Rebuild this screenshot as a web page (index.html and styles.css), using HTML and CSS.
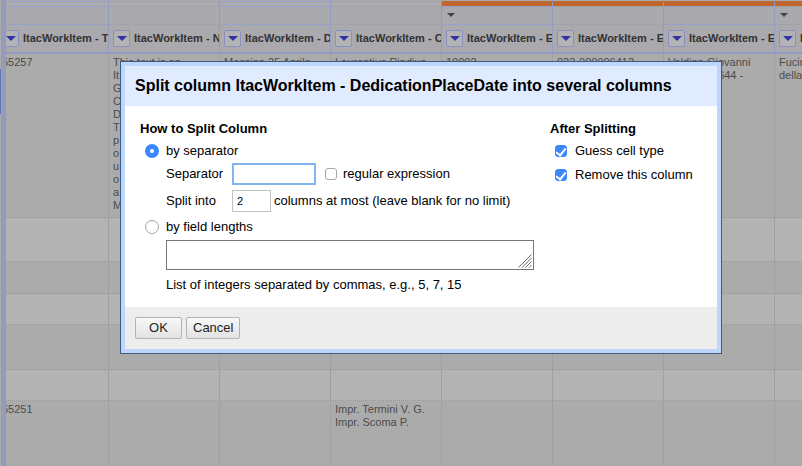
FILE: index.html
```
<!DOCTYPE html>
<html lang="en">
<head>
<meta charset="utf-8">
<title>Split column</title>
<link rel="stylesheet" href="styles.css">
</head>
<body>
<div class="app">
  <div class="rail"><span class="rail-thumb"></span></div>
  <div class="grid-view">
    <table class="data">
      <thead>
        <tr class="edge"><td></td><td></td><td></td><td></td><td class="group"></td><td class="group"></td><td class="group"></td><td class="group"></td></tr>
        <tr class="band"><td></td><td></td><td></td><td></td><td class="group"></td><td class="group"></td><td class="group"></td><td class="group"></td></tr>
        <tr class="toggles"><td></td><td></td><td></td><td></td><td><span class="caret"></span></td><td></td><td></td><td><span class="caret"></span></td></tr>
        <tr class="names">
          <th><div class="name"><button class="menu" aria-label="Column menu"></button>ItacWorkItem - T</div></th>
          <th><div class="name"><button class="menu" aria-label="Column menu"></button>ItacWorkItem - N</div></th>
          <th><div class="name"><button class="menu" aria-label="Column menu"></button>ItacWorkItem - D</div></th>
          <th><div class="name"><button class="menu" aria-label="Column menu"></button>ItacWorkItem - C</div></th>
          <th><div class="name"><button class="menu" aria-label="Column menu"></button>ItacWorkItem - E</div></th>
          <th><div class="name"><button class="menu" aria-label="Column menu"></button>ItacWorkItem - E</div></th>
          <th><div class="name"><button class="menu" aria-label="Column menu"></button>ItacWorkItem - E</div></th>
          <th><div class="name"><button class="menu" aria-label="Column menu"></button>ItacWorkItem - E</div></th>
        </tr>
      </thead>
      <tbody>
        <tr class="first">
          <td>55257</td>
          <td>This text is an<br>It<br>G<br>C<br>D<br>T<br>p<br>o<br>u<br>o<br>a<br>M</td>
          <td>Messina 25 Aprile</td>
          <td>Laurentius Rindius</td>
          <td>10002</td>
          <td>022-000006412</td>
          <td>Valdina Giovanni<br>Messina 1644 -</td>
          <td>Fucina<br>della</td>
        </tr>
        <tr class="medium"><td></td><td></td><td></td><td></td><td></td><td></td><td></td><td></td></tr>
        <tr class="short"><td></td><td></td><td></td><td></td><td></td><td></td><td></td><td></td></tr>
        <tr class="short"><td></td><td></td><td></td><td></td><td></td><td></td><td></td><td></td></tr>
        <tr class="medium"><td></td><td></td><td></td><td></td><td></td><td></td><td></td><td></td></tr>
        <tr class="short"><td></td><td></td><td></td><td></td><td></td><td></td><td></td><td></td></tr>
        <tr class="last"><td>55251</td><td></td><td></td><td>Impr. Termini V. G.<br>Impr. Scoma P.</td><td></td><td></td><td></td><td></td></tr>
      </tbody>
    </table>
  </div>
</div>

<div class="overlay">
  <form class="dialog" role="dialog" aria-labelledby="title">
    <h1 class="dialog-title" id="title">Split column ItacWorkItem - DedicationPlaceDate into several columns</h1>
    <div class="dialog-body">
      <section>
        <h2>How to Split Column</h2>
        <label class="choice"><input type="radio" name="mode" checked>by separator</label>
        <div class="fields">
          <div class="field">
            <label class="field-name" for="sep">Separator</label>
            <input class="text sep" id="sep" type="text">
            <label class="regex"><input type="checkbox">regular expression</label>
          </div>
          <div class="field">
            <label class="field-name" for="max">Split into</label>
            <input class="text max" id="max" type="text" value="2">
            <label for="max">columns at most (leave blank for no limit)</label>
          </div>
        </div>
        <label class="choice"><input type="radio" name="mode">by field lengths</label>
        <div class="lengths">
          <textarea id="lengths" aria-labelledby="hint"></textarea>
          <svg class="grip" viewBox="0 0 14 14" aria-hidden="true"><path d="M0.5 13.5L13.5 0.5M4 13.5L13.5 4M7.5 13.5L13.5 7.5M11 13.5L13.5 11"/></svg>
        </div>
        <label class="hint" id="hint" for="lengths">List of integers separated by commas, e.g., 5, 7, 15</label>
      </section>
      <section>
        <h2>After Splitting</h2>
        <label class="option"><input type="checkbox" checked>Guess cell type</label>
        <label class="option"><input type="checkbox" checked>Remove this column</label>
      </section>
    </div>
    <div class="dialog-footer">
      <button class="btn" type="button">OK</button>
      <button class="btn" type="button">Cancel</button>
    </div>
  </form>
</div>
</body>
</html>
```
FILE: styles.css
```
* { box-sizing: border-box; }

body {
  margin: 0;
  font-family: "Liberation Sans", Arial, sans-serif;
  font-size: 13px;
  line-height: 16px;
  color: #000;
  background: #ababab;
}

.app {
  display: flex;
  height: 100vh;
  overflow: hidden;
}

.rail {
  flex: none;
  width: 6px;
  padding-top: 69px;
  background: #959cba;
  border-left: 1px solid #acacac;
}

.rail-thumb {
  display: block;
  width: 1px;
  height: 45px;
  margin-left: -1px;
  background: #6378b4;
}

.grid-view {
  flex: 1;
  min-width: 0;
  overflow: hidden;
}

/* The grid is scrolled sideways, so its first column is partly out of view. */
.data {
  width: 888px;
  margin-left: -8px;
  table-layout: fixed;
  border-collapse: separate;
  border-spacing: 0;
  font-size: 11px;
  line-height: 13px;
  color: #4c4c4c;
}

.data td,
.data th {
  padding: 0 4px;
  text-align: left;
  vertical-align: top;
}

.data thead td,
.data thead th {
  background: #a9a9ae;
  border-right: 1px solid #929bc4;
  border-bottom: 1px dotted #929bc4;
}

.edge td { height: 2px; }
.band td { height: 5px; }
.toggles td { height: 18px; }
.data .band .group { background: #c0672f padding-box; }
.data .edge .group { border-bottom: 1px solid #c0672f; }

.caret {
  display: block;
  width: 0;
  margin: 6px 0 0 1px;
  border: 4px solid transparent;
  border-top-color: #444;
  border-bottom: 0;
}

.data .names th {
  height: 29px;
  padding-top: 5px;
  border-bottom: 2px solid #929bc4;
}

.name {
  display: flex;
  align-items: center;
  gap: 4px;
  margin-right: -4px;
  overflow: hidden;
  white-space: nowrap;
  line-height: 15px;
  color: #333;
}

.menu {
  display: grid;
  place-items: center;
  flex: none;
  width: 17px;
  height: 17px;
  padding: 0;
  background: #b3b3b6;
  border: 1px solid #8991c4;
  border-radius: 2px;
}

.menu::before {
  content: "";
  border: 5px solid transparent;
  border-top-color: #3232a4;
  border-bottom: 0;
}

.data tbody td {
  padding-top: 2px;
  background: #ababab;
  border-right: 1px solid #a0a0a0;
  border-bottom: 1px dotted #999;
}

.data tbody tr:nth-child(even) td { background: #b3b3b3; }
.data .first td { height: 164px; }
.data .medium td { height: 44px; }
.data .short td { height: 32px; }
.data tbody tr:nth-child(4) td,
.data tbody tr:nth-child(6) td { height: 31px; }
.data tbody tr:nth-child(5) td { height: 45px; }
.data .last td { height: 80px; }

.overlay {
  position: absolute;
  inset: 0;
  padding: 61px 80px 0 120px;
}

.dialog {
  background: #fff;
  border: 4px solid #bfd6fc;
  outline: 1px solid #3d5c80;
  margin: 1px;
}

.dialog-title {
  margin: 0;
  padding: 10px;
  font-size: 16px;
  line-height: 20px;
  background: #e0ebff;
}

.dialog-body {
  display: grid;
  grid-template-columns: 1fr 152px;
  padding: 14px 15px;
}

h2 {
  margin: 0 0 6px;
  font-size: 13px;
  line-height: 17px;
}

label { display: flex; align-items: center; }

input,
textarea,
button {
  margin: 0;
  font: inherit;
  color: inherit;
}

input[type="radio"],
input[type="checkbox"] {
  appearance: none;
  flex: none;
  width: 12px;
  height: 12px;
  background: #fff;
  border: 1px solid #a6a6a6;
  border-radius: 3px;
}

input[type="radio"] {
  width: 14px;
  height: 14px;
  border-radius: 50%;
}

input[type="radio"]:checked {
  background: #fff;
  border: 5px solid #3b87fb;
}

input[type="checkbox"]:checked {
  display: grid;
  justify-content: center;
  align-content: start;
  background: #3b87fb;
  border-color: #3b87fb;
}

input[type="checkbox"]:checked::before {
  content: "";
  width: 4px;
  height: 8px;
  border: solid #fff;
  border-width: 0 2px 2px 0;
  transform: rotate(38deg);
}

.choice { gap: 7px; padding-left: 5px; }

.fields {
  padding: 1px 0 5px 26px;
}

.field {
  display: flex;
  align-items: center;
  gap: 3px;
  height: 27px;
}

.field-name { width: 63px; }

.text {
  height: 22px;
  padding: 0 4px;
  font-size: 11px;
  border: 1px solid #c2c2c2;
}

.sep {
  width: 84px;
  border: 2px solid #82b5f0;
  outline: 0;
}

.max { width: 39px; }
.regex { gap: 6px; padding-left: 6px; }

.lengths {
  position: relative;
  width: 368px;
  margin: 5px 0 7px 26px;
}

textarea {
  display: block;
  width: 100%;
  height: 30px;
  border: 1px solid #777;
  resize: none;
}

.grip {
  position: absolute;
  right: 2px;
  bottom: 2px;
  width: 14px;
  height: 14px;
  fill: none;
  stroke: #666;
}

.hint { padding-left: 26px; }

.option {
  gap: 8px;
  height: 16px;
  margin-bottom: 8px;
  padding-left: 5px;
}

.dialog-footer {
  display: flex;
  gap: 4px;
  padding: 10px;
  background: #ededed;
}

.btn {
  min-width: 47px;
  height: 22px;
  padding: 0 6px;
  color: #222;
  background: linear-gradient(#f8f8f8, #e2e2e2);
  border: 1px solid #b3b3b3;
  border-radius: 2px;
}
```
